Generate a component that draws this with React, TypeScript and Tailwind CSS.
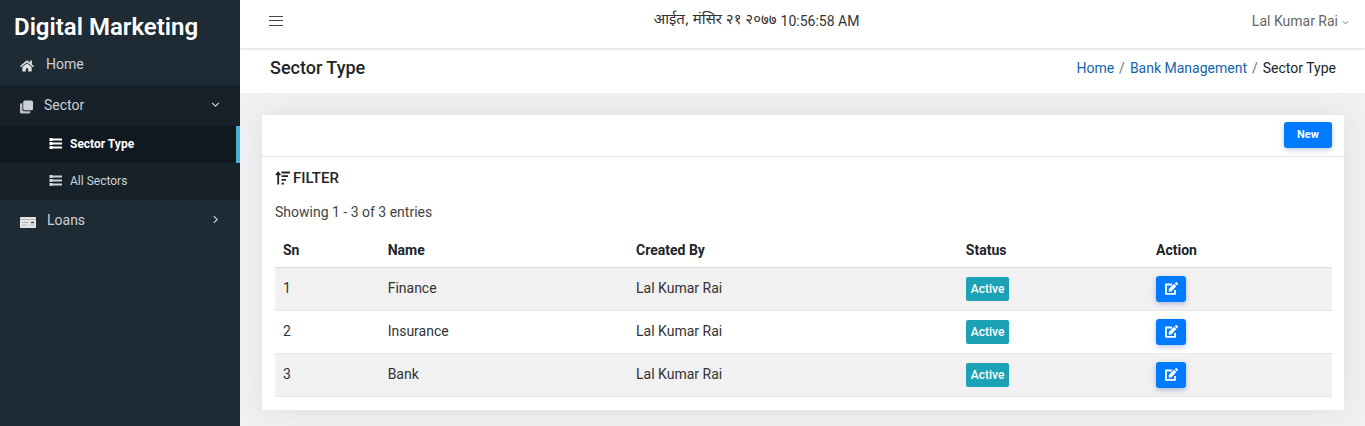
import type { ReactNode } from "react";
import { FaHome } from "react-icons/fa";

const rows = [
  { sn: 1, name: "Finance", by: "Lal Kumar Rai" },
  { sn: 2, name: "Insurance", by: "Lal Kumar Rai" },
  { sn: 3, name: "Bank", by: "Lal Kumar Rai" },
];

function Chevron({ className }: { className: string }) {
  return (
    <svg viewBox="0 0 8 8" className={className} fill="none" stroke="currentColor" strokeWidth="1" aria-hidden="true">
      <path d="M1 2.5 4 5.5 7 2.5" />
    </svg>
  );
}

function ListIcon() {
  return (
    <svg viewBox="0 0 13 11" className="h-[11px] w-[13px]" fill="currentColor" aria-hidden="true">
      <path d="M.5 0h3v3h-3zM.5 4h3v3h-3zM.5 8h3v3h-3zM3.500 .5H13v2H3.500zM3.500 4.500H13v2H3.500zM3.500 8.500H13v2H3.500z" />
    </svg>
  );
}

function LayersIcon() {
  return (
    <svg viewBox="0 0 13 14" className="mt-1 h-[14px] w-[13px]" fill="currentColor" aria-hidden="true">
      <rect x="3.2" y="0.5" width="9.8" height="9.8" rx="1.6" />
      <path d="M2.4 3.2v6.3c0 1 .7 1.7 1.7 1.7h6.3v.9c0 .9-.6 1.5-1.5 1.5H1.5C.6 13.6 0 13 0 12.1V4.7c0-.9.6-1.5 1.5-1.5z" opacity=".9" />
    </svg>
  );
}

function CardIcon() {
  return (
    <svg viewBox="0 0 16 11" className="mt-1 h-[11px] w-4" aria-hidden="true">
      <rect width="16" height="11" rx="0.8" fill="#e2e4e5" />
      <path d="M0 2.5h16" stroke="#a3a9ae" strokeWidth="0.7" />
      <path d="M2 5.5h6M2 8h4.5M10.5 8h3" stroke="#a3a9ae" strokeWidth="0.8" />
      <path d="M11 5.5h3" stroke="#26323c" strokeWidth="1.2" />
    </svg>
  );
}

function SortIcon() {
  return (
    <svg viewBox="0 0 15 14" className="h-[14px] w-[15px]" fill="none" stroke="currentColor" strokeWidth="1.8" aria-hidden="true">
      <path d="M3.2 13.5V2M1 4 3.200 1.600 5.400 4M6.500 1.500H15M6.500 5.200H13M6.500 8.900h4.500M6.500 12.600h2.500" />
    </svg>
  );
}

function EditIcon() {
  return (
    <svg viewBox="0 0 13 13" className="h-[13px] w-[13px]" aria-hidden="true">
      <path d="M7 2.5H1v9.3h9V8" fill="none" stroke="currentColor" strokeWidth="1.8" />
      <path d="M3.800 9.700V6.900L9 1.700l2.400 2.400L6.300 9.500zM9.700 1.200 10.800.3c.3-.3.7-.3 1 0l1 1c.3.3.3.7 0 1L12 3.500z" fill="currentColor" />
    </svg>
  );
}

function SubItem({ active, children }: { active?: boolean; children: ReactNode }) {
  return (
    <li>
      <a
        href="#"
        aria-current={active ? "page" : undefined}
        className={
          active
            ? "flex h-[37px] items-center gap-2 border-r-4 border-[#4bafd5] bg-[#111920] pb-[2px] pl-[49px] text-[12px] font-bold text-white"
            : "flex h-[37px] items-center gap-2 pb-[2px] pl-[49px] text-[12px] text-[#cfd4d8]"
        }
      >
        <ListIcon />
        {children}
      </a>
    </li>
  );
}

function Sidebar() {
  return (
    <aside className="w-60 shrink-0 bg-[#1e2b35] text-[14px] text-[#cdd1d5]">
      <a href="#" className="flex h-12 items-center border-b border-[#1b262f] pt-[6px] pl-[14px] text-[24px] font-semibold text-white">
        Digital Marketing
      </a>
      <nav>
        <ul>
          <li>
            <a href="#" className="flex h-[37px] items-center gap-3 pb-[6px] pl-5">
              <FaHome className="mt-1 size-[14px] text-[#dfe1e3]" />
              Home
            </a>
          </li>
          <li className="bg-[#172129]">
            <button type="button" className="flex h-[41px] w-full items-center gap-[11px] pr-5 pb-[2px] pl-5" aria-expanded="true">
              <LayersIcon />
              Sector
              <Chevron className="ml-auto size-[9px]" />
            </button>
            <ul>
              <SubItem active>Sector Type</SubItem>
              <SubItem>All Sectors</SubItem>
            </ul>
          </li>
          <li>
            <button type="button" className="flex h-10 w-full items-center gap-[11px] pr-5 pl-5" aria-expanded="false">
              <CardIcon />
              Loans
              <Chevron className="mb-[2px] ml-auto size-[9px] -rotate-90" />
            </button>
          </li>
        </ul>
      </nav>
    </aside>
  );
}

export default function App() {
  return (
    <div className="flex min-h-screen bg-[#f1f1f2] font-['Roboto',sans-serif] text-[14px] leading-5 text-[#212529]">
      <Sidebar />
      <div className="flex min-w-0 grow flex-col">
        <header className="relative grid h-12 grid-cols-[44fr_auto_56fr] items-center bg-white pr-4 pb-[7px] pl-[29px] shadow-[0_1px_3px_rgba(0,0,0,0.15)]">
          <button type="button" aria-label="Toggle sidebar" className="size-[14px] text-[#444]">
            <svg viewBox="0 0 14 14" fill="none" stroke="currentColor" strokeWidth="1">
              <path d="M0 2.5h14M0 6.5h14M0 11.5h14" />
            </svg>
          </button>
          <time className="flex items-center gap-1 text-[#333]">
            <span className="font-['Noto_Sans_Devanagari','Roboto','Noto_Sans',sans-serif] text-[15px]">आईत, मंसिर २१ २०७७</span>
            <span>10:56:58 AM</span>
          </time>
          <button type="button" className="flex items-center gap-1 justify-self-end text-[#666]">
            Lal Kumar Rai
            <Chevron className="mt-1 size-[7px]" />
          </button>
        </header>
        <div className="flex h-[45px] items-center justify-between bg-white pr-[29px] pb-[6px] pl-[30px]">
          <h1 className="text-[18px] font-medium">Sector Type</h1>
          <nav aria-label="Breadcrumb">
            <ol className="flex gap-[5px]">
              <li><a href="#" className="text-[#1565ab]">Home</a></li>
              <li className="text-[#6c757d]">/</li>
              <li><a href="#" className="text-[#1565ab]">Bank Management</a></li>
              <li className="text-[#6c757d]">/</li>
              <li aria-current="page">Sector Type</li>
            </ol>
          </nav>
        </div>
        <main className="pt-[22px] pr-[21px] pb-4 pl-[22px]">
          <section className="bg-white shadow-[0_0_28px_rgba(82,63,105,0.11)]">
            <div className="flex h-[42px] items-center justify-end border-b border-[#e6e7ea] pr-3 pb-[2px]">
              <button type="button" className="h-[26px] w-12 rounded-[3px] bg-[#007bff] text-[11px] font-bold text-white shadow-[0_2px_5px_rgba(60,80,180,0.3)]">
                New
              </button>
            </div>
            <div className="pt-[11px] pr-3 pb-[13px] pl-[13px]">
              <h2 className="flex items-center gap-[3px] text-[15px] leading-5 font-medium">
                <SortIcon />
                FILTER
              </h2>
              <p className="mt-[14px] text-[#444]">Showing 1 - 3 of 3 entries</p>
              <table className="mt-[11px] w-full table-fixed text-left">
                <thead>
                  <tr className="h-[34px] border-b border-[#d8dce0]">
                    <th className="w-[9.9%] pl-2 font-bold">Sn</th>
                    <th className="w-[23.5%] pl-2 font-bold">Name</th>
                    <th className="w-[31.2%] pl-2 font-bold">Created By</th>
                    <th className="w-[18%] pl-2 font-bold">Status</th>
                    <th className="pl-2 font-bold">Action</th>
                  </tr>
                </thead>
                <tbody>
                  {rows.map((r) => (
                    <tr key={r.sn} className="h-[43px] border-b border-[#e4e7ea] text-[#333] odd:bg-[#f1f1f1]">
                      <td className="pb-[2px] pl-2">{r.sn}</td>
                      <td className="pb-[2px] pl-2">{r.name}</td>
                      <td className="pb-[2px] pl-2">{r.by}</td>
                      <td className="pl-2">
                        <span className="inline-flex h-6 items-center rounded-[2px] bg-[#1ba2b5] px-[5px] align-middle text-[12px] font-medium text-white">Active</span>
                      </td>
                      <td className="pl-2">
                        <button type="button" aria-label={`Edit ${r.name}`} className="inline-flex h-[26px] w-[30px] items-center justify-center rounded-[3px] bg-[#007bff] align-middle text-white shadow-[0_2px_5px_rgba(60,80,180,0.35)]">
                          <EditIcon />
                        </button>
                      </td>
                    </tr>
                  ))}
                </tbody>
              </table>
            </div>
          </section>
        </main>
      </div>
    </div>
  );
}
